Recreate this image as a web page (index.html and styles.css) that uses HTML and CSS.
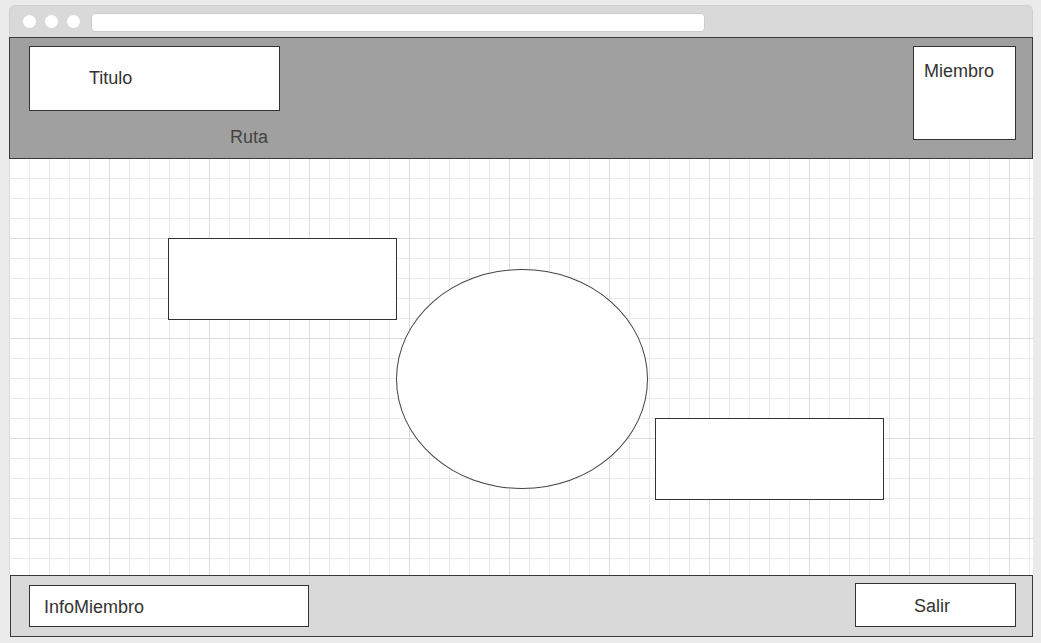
FILE: index.html
```html
<!DOCTYPE html>
<html>
<head>
<meta charset="utf-8">
<link rel="stylesheet" href="styles.css">
</head>
<body>
<div class="window">
  <div class="titlebar">
    <span class="dot"></span><span class="dot"></span><span class="dot"></span>
    <div class="url"></div>
  </div>
  <header class="header">
    <div class="title-col">
      <div class="title-box">Titulo</div>
      <div class="ruta">Ruta</div>
    </div>
    <div class="member-box">Miembro</div>
  </header>
  <main class="canvas">
    <div class="shape rect1"></div>
    <div class="shape ellipse"></div>
    <div class="shape rect2"></div>
  </main>
  <footer class="footer">
    <div class="info-box">InfoMiembro</div>
    <div class="salir-box">Salir</div>
  </footer>
</div>
</body>
</html>
```
FILE: styles.css
```css
* { box-sizing: border-box; }
html, body { margin: 0; padding: 0; }
body {
  background: #ebebeb;
  font-family: "Liberation Sans", Arial, sans-serif;
  font-size: 18px;
  color: #333;
}
.window {
  margin: 5px 0 0 9px;
  width: 1024px;
}
.titlebar {
  height: 32px;
  background: #d9d9d9;
  border: 1px solid #cfcfcf;
  border-bottom: none;
  border-radius: 6px 6px 0 0;
  display: flex;
  align-items: center;
  padding-left: 13px;
  gap: 9px;
}
.dot {
  width: 13px;
  height: 13px;
  border-radius: 50%;
  background: #fff;
  flex: none;
}
.url {
  margin-left: 2px;
  width: 614px;
  height: 19px;
  background: #fff;
  border-radius: 4px;
  border: 1px solid #cccccc;
  margin-top: 1px;
}
.header {
  height: 122px;
  background: #a0a0a0;
  border: 1px solid #3a3a3a;
  display: flex;
  justify-content: space-between;
  align-items: flex-start;
  padding: 8px 16px 0 19px;
}
.title-box {
  width: 251px;
  height: 65px;
  background: #fff;
  border: 1px solid #333;
  display: flex;
  align-items: center;
  padding-left: 59px;
  color: #333;
}
.ruta {
  margin-top: 16px;
  padding-left: 201px;
  color: #444;
}
.member-box {
  width: 103px;
  height: 94px;
  background: #fff;
  border: 1px solid #333;
  padding: 14px 0 0 10px;
  color: #333;
}
.canvas {
  position: relative;
  height: 416px;
  background-color: #fff;
  background-image:
    linear-gradient(to right, #dcdcdc 1px, transparent 1px),
    linear-gradient(to bottom, #dcdcdc 1px, transparent 1px),
    linear-gradient(to right, #eaeaea 1px, transparent 1px),
    linear-gradient(to bottom, #eaeaea 1px, transparent 1px);
  background-size: 100px 100px, 100px 100px, 20px 20px, 20px 20px;
  background-position: 0 79px, 0 79px, 0 19px, 0 19px;
}
.shape {
  position: absolute;
  background: #fff;
  border: 1px solid #333;
}
.rect1 { left: 159px; top: 79px; width: 229px; height: 82px; }
.rect2 { left: 646px; top: 259px; width: 229px; height: 82px; }
.ellipse {
  left: 387px; top: 110px; width: 252px; height: 220px;
  border-radius: 50%;
  border-color: #444;
}
.footer {
  margin-left: 1px;
  width: 1023px;
  height: 62px;
  background: #d9d9d9;
  border: 1px solid #3a3a3a;
  display: flex;
  justify-content: space-between;
  align-items: flex-end;
  padding: 0 16px 9px 18px;
}
.info-box {
  width: 280px;
  height: 42px;
  background: #fff;
  border: 1px solid #333;
  padding: 11px 0 0 14px;
}
.salir-box {
  width: 161px;
  height: 44px;
  background: #fff;
  border: 1px solid #333;
  text-align: center;
  padding: 12px 7px 0 0;
}
```
